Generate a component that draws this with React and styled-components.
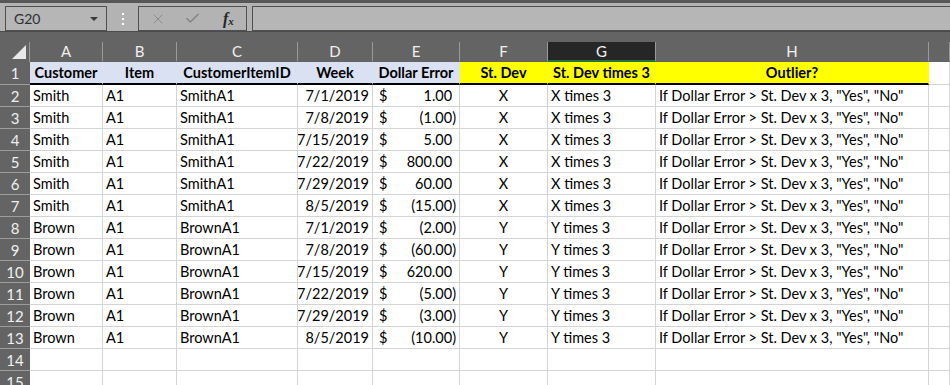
import React from "react"
import styled, { createGlobalStyle } from "styled-components"
import { X, Check } from "lucide-react"

const GlobalStyle = createGlobalStyle`
    html, body {
        margin: 0;
        padding: 0;
        background: #ffffff;
    }
    body {
        font-family: Lato, "Liberation Sans", sans-serif;
    }
`

const COLS = "30px 73px 74px 121px 75px 87px 88px 108px 273px 1fr"

const Page = styled.main`
    height: 100vh;
    overflow: hidden;
    display: flex;
    flex-direction: column;
    background: #646464;
`

const Toolbar = styled.header`
    display: flex;
    align-items: flex-start;
    padding: 3px 0 0 5px;
    box-sizing: border-box;
    height: 32px;
    background: #b3b3b3;
    border-top: 3px solid #575757;
    border-bottom: 1px solid #4b4b4b;
`

const NameBox = styled.div`
    position: relative;
    width: 102px;
    height: 25px;
    box-sizing: border-box;
    border: 1px solid #505050;
    background: #b6b6b6;
    color: #2e2e2e;
    font-size: 14px;
    line-height: 23px;
    padding-left: 8px;
`

const DropArrow = styled.span`
    position: absolute;
    right: 8px;
    top: 10px;
    border-left: 4px solid transparent;
    border-right: 4px solid transparent;
    border-top: 4px solid #3a3a3a;
`

const Dots = styled.div`
    width: 31px;
    height: 25px;
    display: flex;
    flex-direction: column;
    align-items: center;
    justify-content: center;
    gap: 3px;

    span {
        width: 2px;
        height: 2px;
        background: #ffffff;
    }
`

const FxButtons = styled.div`
    width: 109px;
    height: 25px;
    box-sizing: border-box;
    border: 1px solid #505050;
    display: flex;
    align-items: center;
    padding-left: 1px;
    color: #858585;
`

const FxSlot = styled.span`
    width: 36px;
    display: flex;
    justify-content: center;
    align-items: center;
`

const FxLabel = styled.span`
    font-family: "Liberation Serif", serif;
    font-style: italic;
    font-weight: bold;
    font-size: 16px;
    color: #262626;

    sub {
        font-size: 11px;
        vertical-align: -1px;
    }
`

const FormulaInput = styled.div`
    flex: 1;
    height: 25px;
    margin-left: 5px;
    margin-right: -10px;
    box-sizing: border-box;
    border: 1px solid #505050;
    background: #b6b6b6;
`

const SheetArea = styled.section`
    padding-top: 10px;
    flex: 1;
`

const Grid = styled.div`
    display: grid;
    grid-template-columns: ${COLS};
    grid-template-rows: 20px 23px;
    grid-auto-rows: 22px;
`

const Corner = styled.div`
    background: #646464;
    border-right: 1px solid #9a9a9a;
    position: relative;

    &::after {
        content: "";
        position: absolute;
        right: 3px;
        bottom: 3px;
        border-left: 14px solid transparent;
        border-bottom: 14px solid #e8e8e8;
    }
`

const ColHead = styled.div`
    background: ${p => (p.$active ? "#262626" : "#646464")};
    border-right: 1px solid #9a9a9a;
    border-bottom: 2px solid ${p => (p.$active ? "#217346" : "#646464")};
    color: #f0f0f0;
    font-size: 15px;
    display: flex;
    align-items: center;
    justify-content: center;
`

const RowHead = styled.div`
    background: #646464;
    border-bottom: 1px solid #9c9c9c;
    color: #f0f0f0;
    font-size: 15px;
    display: flex;
    align-items: center;
    justify-content: center;
`

const Cell = styled.div`
    box-sizing: border-box;
    background: ${p => p.$bg || "#ffffff"};
    border-right: 1px solid ${p => (p.$bg ? "transparent" : "#d4d4d4")};
    border-bottom: ${p => (p.$thick ? "2px solid #000000" : "1px solid #d4d4d4")};
    display: flex;
    align-items: center;
    justify-content: ${p => p.$align || "flex-start"};
    padding: 0 3px;
    font-size: 14.5px;
    font-weight: ${p => (p.$bold ? 700 : 400)};
    color: #000000;
    white-space: nowrap;
    overflow: hidden;
`

const Money = styled.div`
    display: flex;
    justify-content: space-between;
    width: 100%;
    padding-left: 3px;
`

const Ghost = styled.span`
    visibility: hidden;
`

const LAV = "#d9e1f2"
const YEL = "#ffff00"

const headers = [
    { text: "Customer", bg: LAV },
    { text: "Item", bg: LAV },
    { text: "CustomerItemID", bg: LAV },
    { text: "Week", bg: LAV },
    { text: "Dollar Error", bg: LAV },
    { text: "St. Dev", bg: YEL },
    { text: "St. Dev times 3", bg: YEL },
    { text: "Outlier?", bg: YEL },
]

const weeks = ["7/1/2019", "7/8/2019", "7/15/2019", "7/22/2019", "7/29/2019", "8/5/2019"]
const people = [
    { name: "Smith", dev: "X", errors: [1, -1, 5, 800, 60, -15] },
    { name: "Brown", dev: "Y", errors: [-2, -60, 620, -5, -3, -10] },
]

const rows = people.flatMap(p =>
    p.errors.map((err, i) => ({
        customer: p.name,
        item: "A1",
        id: p.name + "A1",
        week: weeks[i],
        error: err,
        dev: p.dev,
    }))
)

const Dollar = ({ value }) => {
    const abs = Math.abs(value).toFixed(2)
    return (
        <Money>
            <span>$</span>
            {value < 0 ? <span>({abs})</span> : <span>{abs}<Ghost>)</Ghost></span>}
        </Money>
    )
}

const letters = ["A", "B", "C", "D", "E", "F", "G", "H"]

const App = () => {
    return (
        <>
            <GlobalStyle />
            <Page>
                <Toolbar>
                    <NameBox>G20<DropArrow /></NameBox>
                    <Dots><span /><span /><span /></Dots>
                    <FxButtons>
                        <FxSlot><X size={16} strokeWidth={1.3} /></FxSlot>
                        <FxSlot><Check size={17} strokeWidth={2.2} /></FxSlot>
                        <FxSlot><FxLabel>f<sub>x</sub></FxLabel></FxSlot>
                    </FxButtons>
                    <FormulaInput />
                </Toolbar>
                <SheetArea>
                    <Grid>
                        <Corner />
                        {letters.map(l => (
                            <ColHead key={l} $active={l === "G"}>{l}</ColHead>
                        ))}
                        <ColHead />

                        <RowHead>1</RowHead>
                        {headers.map(h => (
                            <Cell key={h.text} $bg={h.bg} $bold $thick $align="center">{h.text}</Cell>
                        ))}
                        <Cell />

                        {rows.map((r, i) => (
                            <React.Fragment key={i}>
                                <RowHead>{i + 2}</RowHead>
                                <Cell>{r.customer}</Cell>
                                <Cell>{r.item}</Cell>
                                <Cell>{r.id}</Cell>
                                <Cell $align="flex-end">{r.week}</Cell>
                                <Cell><Dollar value={r.error} /></Cell>
                                <Cell $align="center">{r.dev}</Cell>
                                <Cell>{r.dev} times 3</Cell>
                                <Cell>If Dollar Error &gt; St. Dev x 3, "Yes", "No"</Cell>
                                <Cell />
                            </React.Fragment>
                        ))}

                        {[14, 15].map(n => (
                            <React.Fragment key={n}>
                                <RowHead>{n}</RowHead>
                                {letters.map(l => <Cell key={l} />)}
                                <Cell />
                            </React.Fragment>
                        ))}
                    </Grid>
                </SheetArea>
            </Page>
        </>
    )
}

export default App
